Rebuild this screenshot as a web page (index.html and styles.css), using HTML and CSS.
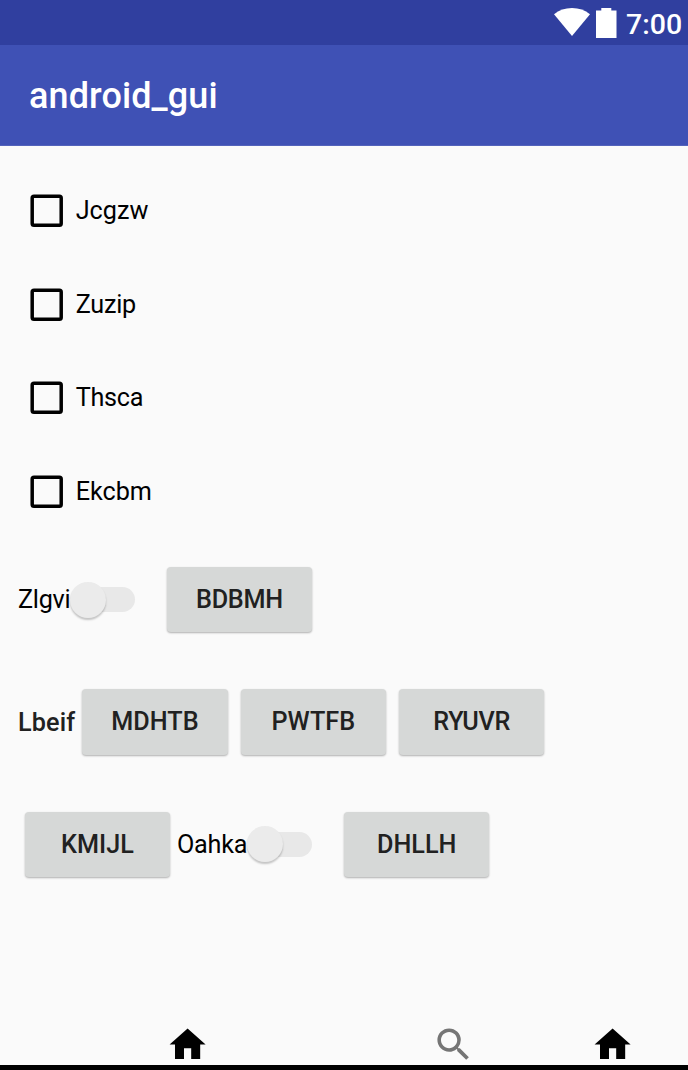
FILE: index.html
```html
<!DOCTYPE html>
<html lang="en">
<head>
<meta charset="utf-8">
<title>android_gui</title>
<link rel="stylesheet" href="styles.css">
</head>
<body>
<div class="screen">
  <header class="status">
    <svg class="wifi" viewBox="0 0 36 28"><path d="M0 6.200C5 2.200 11 0 18 0s13 2.200 18 6.200L18 28z"/></svg>
    <svg class="battery" viewBox="0 0 21 30"><path d="M5.300 0h10v2.600H20.500V30H0V2.600h5.300z"/></svg>
    <span class="clock">7:00</span>
  </header>
  <div class="appbar"><h1 class="title">android_gui</h1></div>
  <main class="content">
    <label class="check"><svg class="box" viewBox="0 0 33 33"><rect x="2.200" y="2.200" width="29" height="29" rx="1.800"/></svg><span class="text">Jcgzw</span></label>
    <label class="check"><svg class="box" viewBox="0 0 33 33"><rect x="2.200" y="2.200" width="29" height="29" rx="1.800"/></svg><span class="text tight">Zuzip</span></label>
    <label class="check"><svg class="box" viewBox="0 0 33 33"><rect x="2.200" y="2.200" width="29" height="29" rx="1.800"/></svg><span class="text tight">Thsca</span></label>
    <label class="check"><svg class="box" viewBox="0 0 33 33"><rect x="2.200" y="2.200" width="29" height="29" rx="1.800"/></svg><span class="text">Ekcbm</span></label>
    <div class="row row-a">
      <span class="text tight">Zlgvi</span><span class="switch"><span class="thumb"></span></span>
      <button class="btn tight">BDBMH</button>
    </div>
    <div class="row row-b">
      <span class="text strong">Lbeif</span>
      <button class="btn">MDHTB</button>
      <button class="btn">PWTFB</button>
      <button class="btn tight">RYUVR</button>
    </div>
    <div class="row row-c">
      <button class="btn">KMIJL</button>
      <span class="text tight">Oahka</span><span class="switch"><span class="thumb"></span></span>
      <button class="btn">DHLLH</button>
    </div>
  </main>
  <nav class="nav">
    <svg class="icon home" viewBox="0 0 24 24"><path d="M10 20v-6h4v6h5v-8h3L12 3 2 12h3v8z"/></svg>
    <svg class="icon search" viewBox="0 0 24 24"><path d="M15.500 14h-.79l-.28-.27A6.471 6.471 0 0 0 16 9.500 6.500 6.500 0 1 0 9.500 16c1.610 0 3.090-.59 4.230-1.570l.27.28v.79l5 4.990L20.490 19l-4.990-5zm-6 0C7.010 14 5 11.990 5 9.500S7.010 5 9.500 5 14 7.010 14 9.500 11.990 14 9.500 14z"/></svg>
    <svg class="icon home" viewBox="0 0 24 24"><path d="M10 20v-6h4v6h5v-8h3L12 3 2 12h3v8z"/></svg>
  </nav>
</div>
</body>
</html>
```
FILE: styles.css
```css
* { box-sizing: border-box; }
body { margin: 0; font-family: Roboto, sans-serif; color: #000; }
.screen {
  display: flex; flex-direction: column;
  width: 688px; height: 1070px; overflow: hidden;
  background: #fafafa;
}
.status {
  display: flex; align-items: flex-start; flex: none;
  height: 45px; padding: 8px 0 0 554px;
  background: #303f9f; color: #fff;
}
.wifi { width: 36px; height: 28px; fill: #fff; }
.battery { width: 21px; height: 30px; margin-left: 6px; fill: #fff; }
.clock { margin-left: 9px; font-size: 28.500px; line-height: 34px; font-weight: 500; }
.appbar {
  display: flex; align-items: center; flex: none;
  height: 101px; padding: 2px 0 0 29px;
  background: #3f51b5; border-bottom: 1px solid #5363bb;
}
.title { margin: 0; font-size: 36px; line-height: 42px; font-weight: 500; letter-spacing: .1px; color: #fff; }
.content { flex: 1; padding-top: 17.700px; }
.check { display: flex; align-items: center; height: 93.600px; padding-left: 30px; }
.box { width: 33px; height: 33px; fill: none; stroke: #000; stroke-width: 3.500px; }
.text { padding-top: 1.400px; font-size: 25.200px; line-height: 30px; white-space: nowrap; }
.check .text { margin-left: 12.700px; }
.tight { letter-spacing: -.25px; }
.row { display: flex; align-items: center; height: 122.400px; padding-top: .6px; }
.strong { font-weight: 500; letter-spacing: .15px; color: #212121; }
.btn {
  flex: none; width: 145.500px; height: 65.500px; padding: 1px 0 0;
  border: 0; border-radius: 4px;
  background: #d6d8d7; color: #212121;
  font: 500 25.200px/30px Roboto, sans-serif;
  box-shadow: 0 1px 2px rgba(0,0,0,.3);
}
.switch {
  display: flex; align-items: center; flex: none;
  width: 65px; height: 36px;
  position: relative;
}
.switch::before {
  content: ""; width: 60px; height: 25px; margin-left: 5px;
  border-radius: 13px; background: #e8e8e8;
}
.thumb {
  position: absolute; left: 0; top: 0;
  width: 36px; height: 36px; border-radius: 50%;
  background: #ebebeb; box-shadow: 0 2px 2px rgba(0,0,0,.22);
}
.row-a, .row-b { padding-left: 18px; }
.row-a .text { width: 52px; }
.row-a .btn { margin-left: 31.700px; }
.row-b .text { width: 64.200px; }
.row-b .btn + .btn { margin-left: 12.900px; }
.row-c { padding-left: 24.700px; }
.row-c .text { width: 70px; margin-left: 6.800px; }
.row-c .switch + .btn { margin-left: 32px; }
.nav {
  display: flex; flex: none; height: 47px; padding-left: 165.800px;
  border-bottom: 5px solid #000;
}
.icon { width: 43.200px; height: 43.200px; flex: none; }
.search { fill: #757575; margin: 0 115.200px 0 223.400px; }
```
